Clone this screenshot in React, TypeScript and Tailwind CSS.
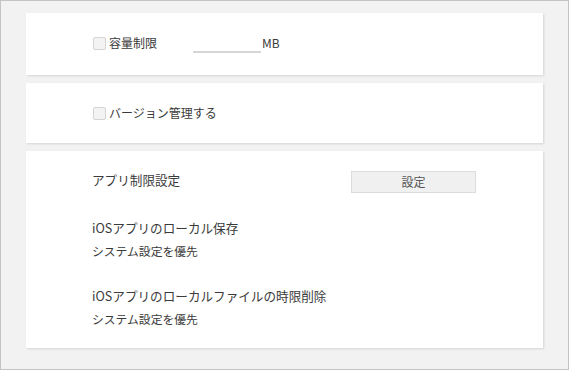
import React from "react";

const FONT = { fontFamily: '"Noto Sans CJK JP", "Noto Sans", sans-serif' };

function Check({ label }: { label: string }) {
  return (
    <label className="flex items-center gap-[3px] text-[12px] text-[#3a3a3a]">
      <span className="w-[13px] h-[13px] rounded-[2px] border border-[#d4d4d4] bg-[#f3f3f3]" />
      <span>{label}</span>
    </label>
  );
}

export default function App() {
  return (
    <div
      className="w-[569px] h-[370px] bg-[#f2f2f2] border border-[#c3c3c3] flex flex-col gap-[8px] pt-[12px] pl-[25px]"
      style={FONT}
    >
      {/* 容量 */}
      <div className="w-[517px] h-[62px] bg-white shadow-[1px_1px_2px_rgba(0,0,0,0.12)] flex items-center pl-[67px] pb-[2px]">
        <div className="w-[100px]">
          <Check label="容量制限" />
        </div>
        <div className="w-[68px] h-[20px] border-b-2 border-[#d6d6d6]" />
        <span className="text-[12px] text-[#3a3a3a] ml-[1px]">MB</span>
      </div>

      {/* バージョン */}
      <div className="w-[517px] h-[60px] bg-white shadow-[1px_1px_2px_rgba(0,0,0,0.12)] flex items-center pl-[67px]">
        <Check label="バージョン管理する" />
      </div>

      {/* アプリ制限 */}
      <div className="w-[517px] h-[197px] bg-white shadow-[1px_1px_2px_rgba(0,0,0,0.12)] pl-[66px] pt-[20px] text-[12.6px] text-[#3a3a3a]">
        <div className="flex items-center h-[22px]">
          <span className="w-[259px] -mt-[3px]">アプリ制限設定</span>
          <button className="w-[125px] h-[22px] bg-[#f0f0f0] border border-[#dcdcdc] text-[12px] text-[#555]">
            設定
          </button>
        </div>
        <div className="mt-[23px] leading-[23px]">
          <p>iOSアプリのローカル保存</p>
          <p className="text-[11.8px]">システム設定を優先</p>
        </div>
        <div className="mt-[22px] leading-[23px]">
          <p>iOSアプリのローカルファイルの時限削除</p>
          <p className="text-[11.8px]">システム設定を優先</p>
        </div>
      </div>
    </div>
  );
}
